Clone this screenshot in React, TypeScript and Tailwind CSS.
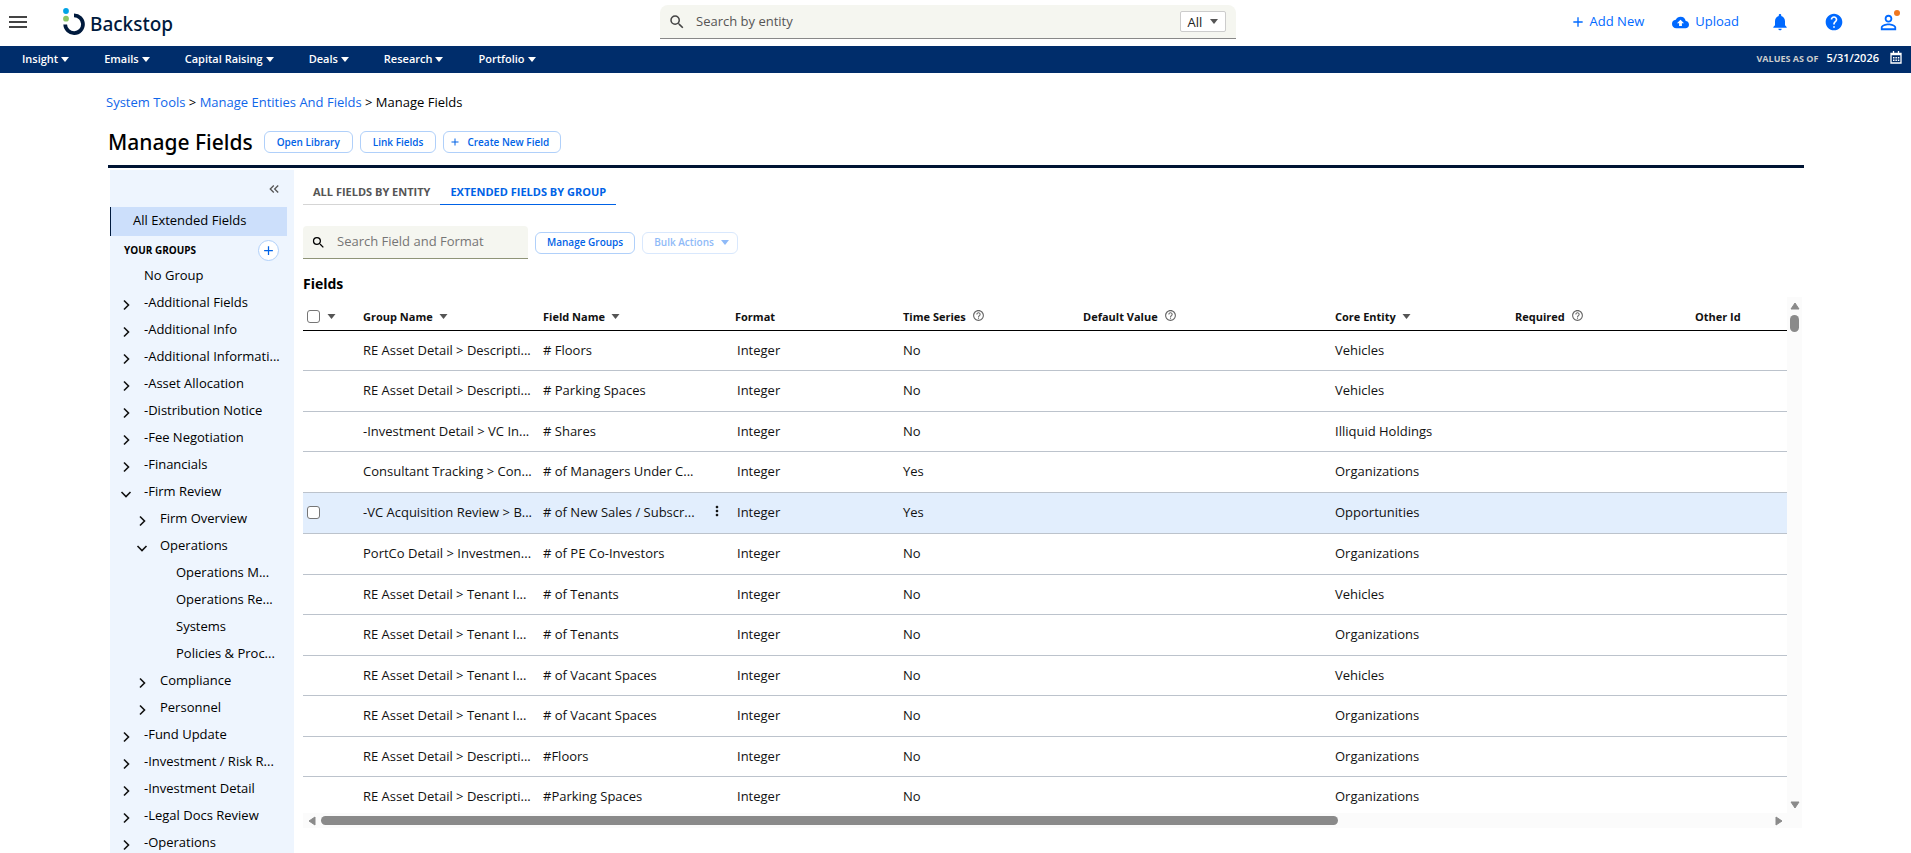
import type { ReactNode } from 'react';
import { MdMenu, MdSearch, MdAdd, MdCloudUpload, MdNotifications, MdHelp, MdPersonOutline, MdKeyboardDoubleArrowLeft, MdHelpOutline, MdMoreVert } from 'react-icons/md';

function Caret({ className = '' }: { className?: string }) {
  return (
    <svg viewBox="0 0 8 5" className={`shrink-0 ${className}`} fill="currentColor" aria-hidden="true">
      <path d="M0 0h8L4 5z" />
    </svg>
  );
}

function Logo() {
  return (
    <a href="#" className="flex items-center text-[#001a3d]">
      <svg viewBox="0 0 22 28" className="h-7 w-[22px]" aria-hidden="true">
        <circle cx="3" cy="3" r="2.900" fill="#00a3e6" />
        <circle cx="3" cy="10.700" r="2.900" fill="#8cc665" />
        <path d="M11 7.300A8.900 8.900 0 1 1 2.200 16.500" fill="none" stroke="#001a3d" strokeWidth="3.700" />
      </svg>
      <span className="ml-[5px] pt-1 font-['Noto_Sans'] text-[19px] leading-6 font-medium">Backstop</span>
    </a>
  );
}

const menus = ['Insight', 'Emails', 'Capital Raising', 'Deals', 'Research', 'Portfolio'];

function TopBar() {
  return (
    <header>
      <div className="flex h-[46px] items-center pr-[14px] pb-[2px]">
        <div className="flex flex-1 items-center pl-[6px]">
          <button aria-label="Menu" className="mr-[33px] text-[#444]"><MdMenu className="size-6" /></button>
          <Logo />
        </div>
        <div className="mr-[7px] flex h-[34px] w-[576px] items-center rounded-t-lg border-b border-[#888] bg-[#f5f6f0] pr-[10px] pl-2">
          <MdSearch className="size-[18px] shrink-0 text-[#444]" />
          <input aria-label="Search by entity" placeholder="Search by entity" className="ml-[10px] min-w-0 flex-1 bg-transparent text-[13px] outline-none placeholder:text-[#555]" />
          <button className="flex h-[21px] w-[46px] items-center justify-center gap-2 rounded-xs border border-[#ccc] bg-white text-[13px] leading-4 text-[#222]">
            All <Caret className="h-[5px] w-2 text-[#555]" />
          </button>
        </div>
        <div className="flex flex-1 items-center justify-end text-[13px] text-[#0069ff]">
          <button className="mr-7 flex items-center gap-1"><MdAdd className="size-4" />Add New</button>
          <button className="mr-[31px] flex items-center gap-[6px]"><MdCloudUpload className="size-[17px]" />Upload</button>
          <button aria-label="Notifications" className="mr-[34px]"><MdNotifications className="size-5" /></button>
          <button aria-label="Help" className="mr-[33px]"><MdHelp className="size-5" /></button>
          <button aria-label="Account" className="relative -mr-[3px]">
            <MdPersonOutline className="size-[23px]" />
            <span className="absolute -top-px right-0 size-[6px] rounded-full bg-[#f07820]" />
          </button>
        </div>
      </div>
      <nav className="flex h-[27px] items-center bg-[#002d6b] pr-[9px] pb-[2px] pl-[22px] text-[11px] font-semibold text-white">
        <div className="flex gap-[35px]">
          {menus.map((m) => (
            <button key={m} className="flex items-center gap-[3px] leading-4">{m}<Caret className="mt-px h-[5px] w-2" /></button>
          ))}
        </div>
        <button className="ml-auto flex items-center">
          <span className="text-[9px] font-bold text-[#ccc]">VALUES AS OF</span>
          <span className="ml-2">5/31/2026</span>
          <CalendarIcon />
        </button>
      </nav>
    </header>
  );
}

function CalendarIcon() {
  return (
    <svg viewBox="0 0 12 13" className="mb-[2px] ml-[11px] h-[13px] w-3" aria-hidden="true">
      <path d="M1 2.500h10v9.500H1zM3.500 0v3M8.500 0v3" fill="none" stroke="white" strokeWidth="1.300" />
      <path d="M1 3.500h10" stroke="white" strokeWidth="1.500" />
      <path d="M3 6.700h6.500M3 9.300h6.500" stroke="white" strokeWidth="1.500" strokeDasharray="1.500 .9" />
    </svg>
  );
}

function PillButton({ children, disabled = false, className = '' }: { children: ReactNode; disabled?: boolean; className?: string }) {
  return (
    <button disabled={disabled} className={`flex h-[22px] items-center rounded-md border bg-white text-[10px] font-semibold whitespace-nowrap ${disabled ? 'border-[#d9e8fd] text-[#8fbaf8]' : 'border-[#b0d0fa] text-[#0062e6]'} ${className}`}>
      {children}
    </button>
  );
}

type Node = { label: string; level: number; state?: 'open' | 'closed' };
const tree: Node[] = [
  { label: 'No Group', level: 0 },
  { label: '-Additional Fields', level: 0, state: 'closed' },
  { label: '-Additional Info', level: 0, state: 'closed' },
  { label: '-Additional Informati...', level: 0, state: 'closed' },
  { label: '-Asset Allocation', level: 0, state: 'closed' },
  { label: '-Distribution Notice', level: 0, state: 'closed' },
  { label: '-Fee Negotiation', level: 0, state: 'closed' },
  { label: '-Financials', level: 0, state: 'closed' },
  { label: '-Firm Review', level: 0, state: 'open' },
  { label: 'Firm Overview', level: 1, state: 'closed' },
  { label: 'Operations', level: 1, state: 'open' },
  { label: 'Operations M...', level: 2 },
  { label: 'Operations Re...', level: 2 },
  { label: 'Systems', level: 2 },
  { label: 'Policies & Proc...', level: 2 },
  { label: 'Compliance', level: 1, state: 'closed' },
  { label: 'Personnel', level: 1, state: 'closed' },
  { label: '-Fund Update', level: 0, state: 'closed' },
  { label: '-Investment / Risk R...', level: 0, state: 'closed' },
  { label: '-Investment Detail', level: 0, state: 'closed' },
  { label: '-Legal Docs Review', level: 0, state: 'closed' },
  { label: '-Operations', level: 0, state: 'closed' },
];
const indents = ['pl-[10px]', 'pl-[26px]', 'pl-[42px]'];

function Sidebar() {
  return (
    <aside className="ml-[2px] w-[184px] shrink-0 overflow-hidden bg-[#eef5fe]">
      <div className="flex h-[37px] items-center justify-end pr-3">
        <button aria-label="Collapse" className="text-[#555]"><MdKeyboardDoubleArrowLeft className="size-4" /></button>
      </div>
      <button className="flex h-[29px] w-[177px] items-center border-l border-[#001a3d] bg-[#ccdffb] pb-[2px] pl-[22px] text-[13px]">All Extended Fields</button>
      <div className="flex h-[27px] items-center justify-between pt-[2px] pr-[15px] pl-[14px]">
        <h2 className="text-[10px] font-bold">YOUR GROUPS</h2>
        <button aria-label="Add group" className="flex size-[21px] items-center justify-center rounded-full border border-[#b0d0fa] bg-white text-[#0062e6]"><MdAdd className="size-[15px]" /></button>
      </div>
      <ul className="text-[13px]">
        {tree.map((n) => (
          <li key={n.label + n.level} className={`flex h-[27px] items-center pb-[2px] ${indents[n.level]}`}>
            <span className="flex w-6 shrink-0">
              {n.state && (
                <button aria-label={n.state === 'open' ? 'Collapse' : 'Expand'} className="mt-1">
                  <svg viewBox="0 0 12 12" className={`size-3 ${n.state === 'open' ? 'rotate-90' : ''}`} aria-hidden="true">
                    <path d="M4 1.500 8.500 6 4 10.500" fill="none" stroke="#111" strokeWidth="1.600" />
                  </svg>
                </button>
              )}
            </span>
            <a href="#" className="whitespace-nowrap">{n.label}</a>
          </li>
        ))}
      </ul>
    </aside>
  );
}

const columns: { label: string; width: string; icon?: 'sort' | 'help' }[] = [
  { label: 'Group Name', width: 'w-[180px]', icon: 'sort' },
  { label: 'Field Name', width: 'w-[192px]', icon: 'sort' },
  { label: 'Format', width: 'w-[168px]' },
  { label: 'Time Series', width: 'w-[180px]', icon: 'help' },
  { label: 'Default Value', width: 'w-[252px]', icon: 'help' },
  { label: 'Core Entity', width: 'w-[180px]', icon: 'sort' },
  { label: 'Required', width: 'w-[180px]', icon: 'help' },
  { label: 'Other Id', width: '' },
];

const rows = [
  ['RE Asset Detail > Descripti...', '# Floors', 'No', 'Vehicles'],
  ['RE Asset Detail > Descripti...', '# Parking Spaces', 'No', 'Vehicles'],
  ['-Investment Detail > VC In...', '# Shares', 'No', 'Illiquid Holdings'],
  ['Consultant Tracking > Con...', '# of Managers Under C...', 'Yes', 'Organizations'],
  ['-VC Acquisition Review > B...', '# of New Sales / Subscr...', 'Yes', 'Opportunities'],
  ['PortCo Detail > Investmen...', '# of PE Co-Investors', 'No', 'Organizations'],
  ['RE Asset Detail > Tenant I...', '# of Tenants', 'No', 'Vehicles'],
  ['RE Asset Detail > Tenant I...', '# of Tenants', 'No', 'Organizations'],
  ['RE Asset Detail > Tenant I...', '# of Vacant Spaces', 'No', 'Vehicles'],
  ['RE Asset Detail > Tenant I...', '# of Vacant Spaces', 'No', 'Organizations'],
  ['RE Asset Detail > Descripti...', '#Floors', 'No', 'Organizations'],
  ['RE Asset Detail > Descripti...', '#Parking Spaces', 'No', 'Organizations'],
];
const ACTIVE_ROW = 4;

function CheckBox({ label }: { label: string }) {
  return <input type="checkbox" aria-label={label} className="block size-[13px] shrink-0 appearance-none rounded-[3px] border border-[#767676] bg-white" />;
}

function FieldsTable() {
  return (
    <table className="h-[515px] w-full table-fixed border-collapse text-left text-[13px] text-[#111]">
      <thead>
        <tr className="h-[27px] border-b border-black">
          <th className="w-[60px] p-0 pl-1">
            <div className="flex items-center gap-[7px]"><CheckBox label="Select all" /><Caret className="h-[5px] w-[9px] text-[#555]" /></div>
          </th>
          {columns.map((c) => (
            <th key={c.label} className={`p-0 pt-px text-[11px] font-bold ${c.width}`}>
              <div className="flex items-center gap-[6px]">
                {c.label}
                {c.icon === 'sort' && <Caret className="h-[5px] w-[9px] text-[#555]" />}
                {c.icon === 'help' && <MdHelpOutline className="mb-[3px] size-[13px] text-[#666]" />}
              </div>
            </th>
          ))}
        </tr>
      </thead>
      <tbody>
        {rows.map(([group, field, series, entity], i) => (
          <tr key={i} className={`border-b border-[#bcc3cc] ${i === ACTIVE_ROW ? 'bg-[#e2eefd]' : ''}`}>
            <td className="p-0 pl-1">{i === ACTIVE_ROW && <CheckBox label={`Select ${field}`} />}</td>
            <td className="p-0 whitespace-nowrap">{group}</td>
            <td className="p-0 whitespace-nowrap">
              <div className="flex items-center justify-between pr-[10px]">
                {field}
                {i === ACTIVE_ROW && <button aria-label="Row actions"><MdMoreVert className="mb-1 size-4" /></button>}
              </div>
            </td>
            <td className="p-0 pl-[2px]">Integer</td>
            <td className="p-0">{series}</td>
            <td className="p-0" />
            <td className="p-0">{entity}</td>
            <td className="p-0" />
            <td className="p-0" />
          </tr>
        ))}
      </tbody>
    </table>
  );
}

function ScrollArrow({ className }: { className: string }) {
  return (
    <svg viewBox="0 0 10 8" className={`h-2 w-[10px] shrink-0 ${className}`} aria-hidden="true">
      <path d="M5 1 9 7H1z" fill="#8a8a8a" stroke="#8a8a8a" strokeLinejoin="round" />
    </svg>
  );
}

export default function App() {
  return (
    <div className="flex h-screen flex-col overflow-hidden bg-white font-['Open_Sans','Noto_Sans',sans-serif] text-black">
      <TopBar />
      <main className="mr-[107px] ml-[108px] flex min-h-0 flex-1 flex-col">
        <nav aria-label="Breadcrumb" className="-ml-[2px] pt-5 text-[13px] leading-[18px]">
          <a href="#" className="text-[#0f66ea]">System Tools</a> &gt; <a href="#" className="text-[#0f66ea]">Manage Entities And Fields</a> &gt; Manage Fields
        </nav>
        <div className="mt-3 flex h-[42px] items-center pb-1">
          <h1 className="mr-[11px] font-['Noto_Sans'] text-[21px] leading-8 font-medium">Manage Fields</h1>
          <div className="flex gap-[7px]">
            <PillButton className="px-3">Open Library</PillButton>
            <PillButton className="px-3">Link Fields</PillButton>
            <PillButton className="gap-[6px] pr-[11px] pl-[5px]"><MdAdd className="size-3" />Create New Field</PillButton>
          </div>
        </div>
        <div className="flex min-h-0 flex-1 border-t-3 border-[#001433] pt-[2px]">
          <Sidebar />
          <section className="ml-[9px] flex min-w-0 flex-1 flex-col">
            <div role="tablist" className="mt-2 flex h-[27px] text-[11px] font-bold">
              <button role="tab" className="border-b border-[#d5d5d5] px-[10px] pt-[2px] text-[#555]">ALL FIELDS BY ENTITY</button>
              <button role="tab" aria-selected="true" className="border-b border-[#0062e6] px-[10px] pt-[2px] text-[#0062e6]">EXTENDED FIELDS BY GROUP</button>
            </div>
            <div className="mt-[21px] flex items-center gap-[7px]">
              <div className="flex h-[33px] w-[225px] items-center rounded-t border-b border-[#8f9478] bg-[#f5f6f0] pl-2">
                <MdSearch className="size-[15px] shrink-0" />
                <input aria-label="Search Field and Format" placeholder="Search Field and Format" className="ml-[11px] min-w-0 flex-1 bg-transparent text-[13px] outline-none placeholder:text-[#757575]" />
              </div>
              <PillButton className="px-[11px]">Manage Groups</PillButton>
              <PillButton disabled className="gap-[7px] pr-2 pl-[11px]">Bulk Actions<Caret className="h-[5px] w-2" /></PillButton>
            </div>
            <h2 className="mt-[15px] text-[14px] leading-5 font-bold">Fields</h2>
            <div className="mt-[3px] flex h-[516px] pr-[2px]">
              <div className="min-w-0 flex-1 overflow-hidden pt-[6px]"><FieldsTable /></div>
              <div className="flex w-[15px] flex-col items-center bg-[#fbfbfb] pt-[5px] pb-1">
                <ScrollArrow className="" />
                <div className="mt-[5px] h-[17px] w-[9px] rounded-full bg-[#8a8a8a]" />
                <ScrollArrow className="mt-auto rotate-180" />
              </div>
            </div>
            <div className="mr-[2px] flex h-[15px] items-center bg-[#fbfbfb] pr-[18px] pl-1">
              <ScrollArrow className="-rotate-90" />
              <div className="ml-1 flex-1"><div className="h-[9px] w-[70%] rounded-full bg-[#8a8a8a]" /></div>
              <ScrollArrow className="rotate-90" />
            </div>
          </section>
        </div>
      </main>
    </div>
  );
}
